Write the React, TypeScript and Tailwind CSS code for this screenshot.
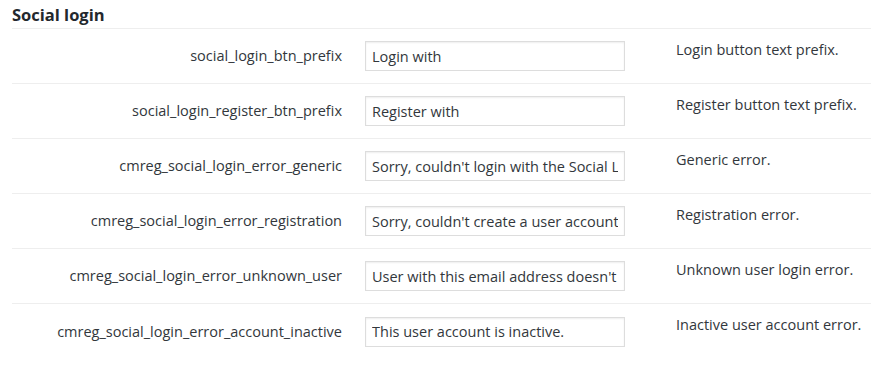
import * as React from 'react';

type Row = {
  name: string;
  value: string;
  description: string;
};

const rows: Row[] = [
  { name: 'social_login_btn_prefix', value: 'Login with', description: 'Login button text prefix.' },
  { name: 'social_login_register_btn_prefix', value: 'Register with', description: 'Register button text prefix.' },
  {
    name: 'cmreg_social_login_error_generic',
    value: "Sorry, couldn't login with the Social Login.",
    description: 'Generic error.',
  },
  {
    name: 'cmreg_social_login_error_registration',
    value: "Sorry, couldn't create a user account.",
    description: 'Registration error.',
  },
  {
    name: 'cmreg_social_login_error_unknown_user',
    value: "User with this email address doesn't exist.",
    description: 'Unknown user login error.',
  },
  {
    name: 'cmreg_social_login_error_account_inactive',
    value: 'This user account is inactive.',
    description: 'Inactive user account error.',
  },
];

const SettingRow = ({ row, last }: { row: Row; last: boolean }) => (
  <div className={last ? 'flex h-[55px]' : 'flex h-[55px] border-b border-[#eeeeee]'}>
    <div className="flex w-[340px] shrink-0 items-center justify-end pr-[10px] text-right">
      {row.name}
    </div>
    <div className="flex w-[312px] shrink-0 items-center pl-[13px]">
      <input
        type="text"
        readOnly
        defaultValue={row.value}
        className="h-[30px] w-[260px] border border-[#dddddd] bg-white px-[6px] text-[14.5px] text-[#32373c] shadow-[inset_0_1px_2px_rgba(0,0,0,0.07)] outline-none"
      />
    </div>
    <div className="pt-[10px] pl-[12px]">{row.description}</div>
  </div>
);

export default function App() {
  return (
    <div className="min-h-screen bg-white pl-3 pt-[5px] font-['Open_Sans','Noto_Sans',sans-serif] text-[14.5px] text-[#32373c]">
      <h2 className="pb-[3px] text-[16.5px] font-bold leading-[20px] text-[#23282d]">Social login</h2>
      <div className="border-t border-[#eeeeee]">
        {rows.map((row, i) => (
          <SettingRow key={row.name} row={row} last={i === rows.length - 1} />
        ))}
      </div>
    </div>
  );
}
